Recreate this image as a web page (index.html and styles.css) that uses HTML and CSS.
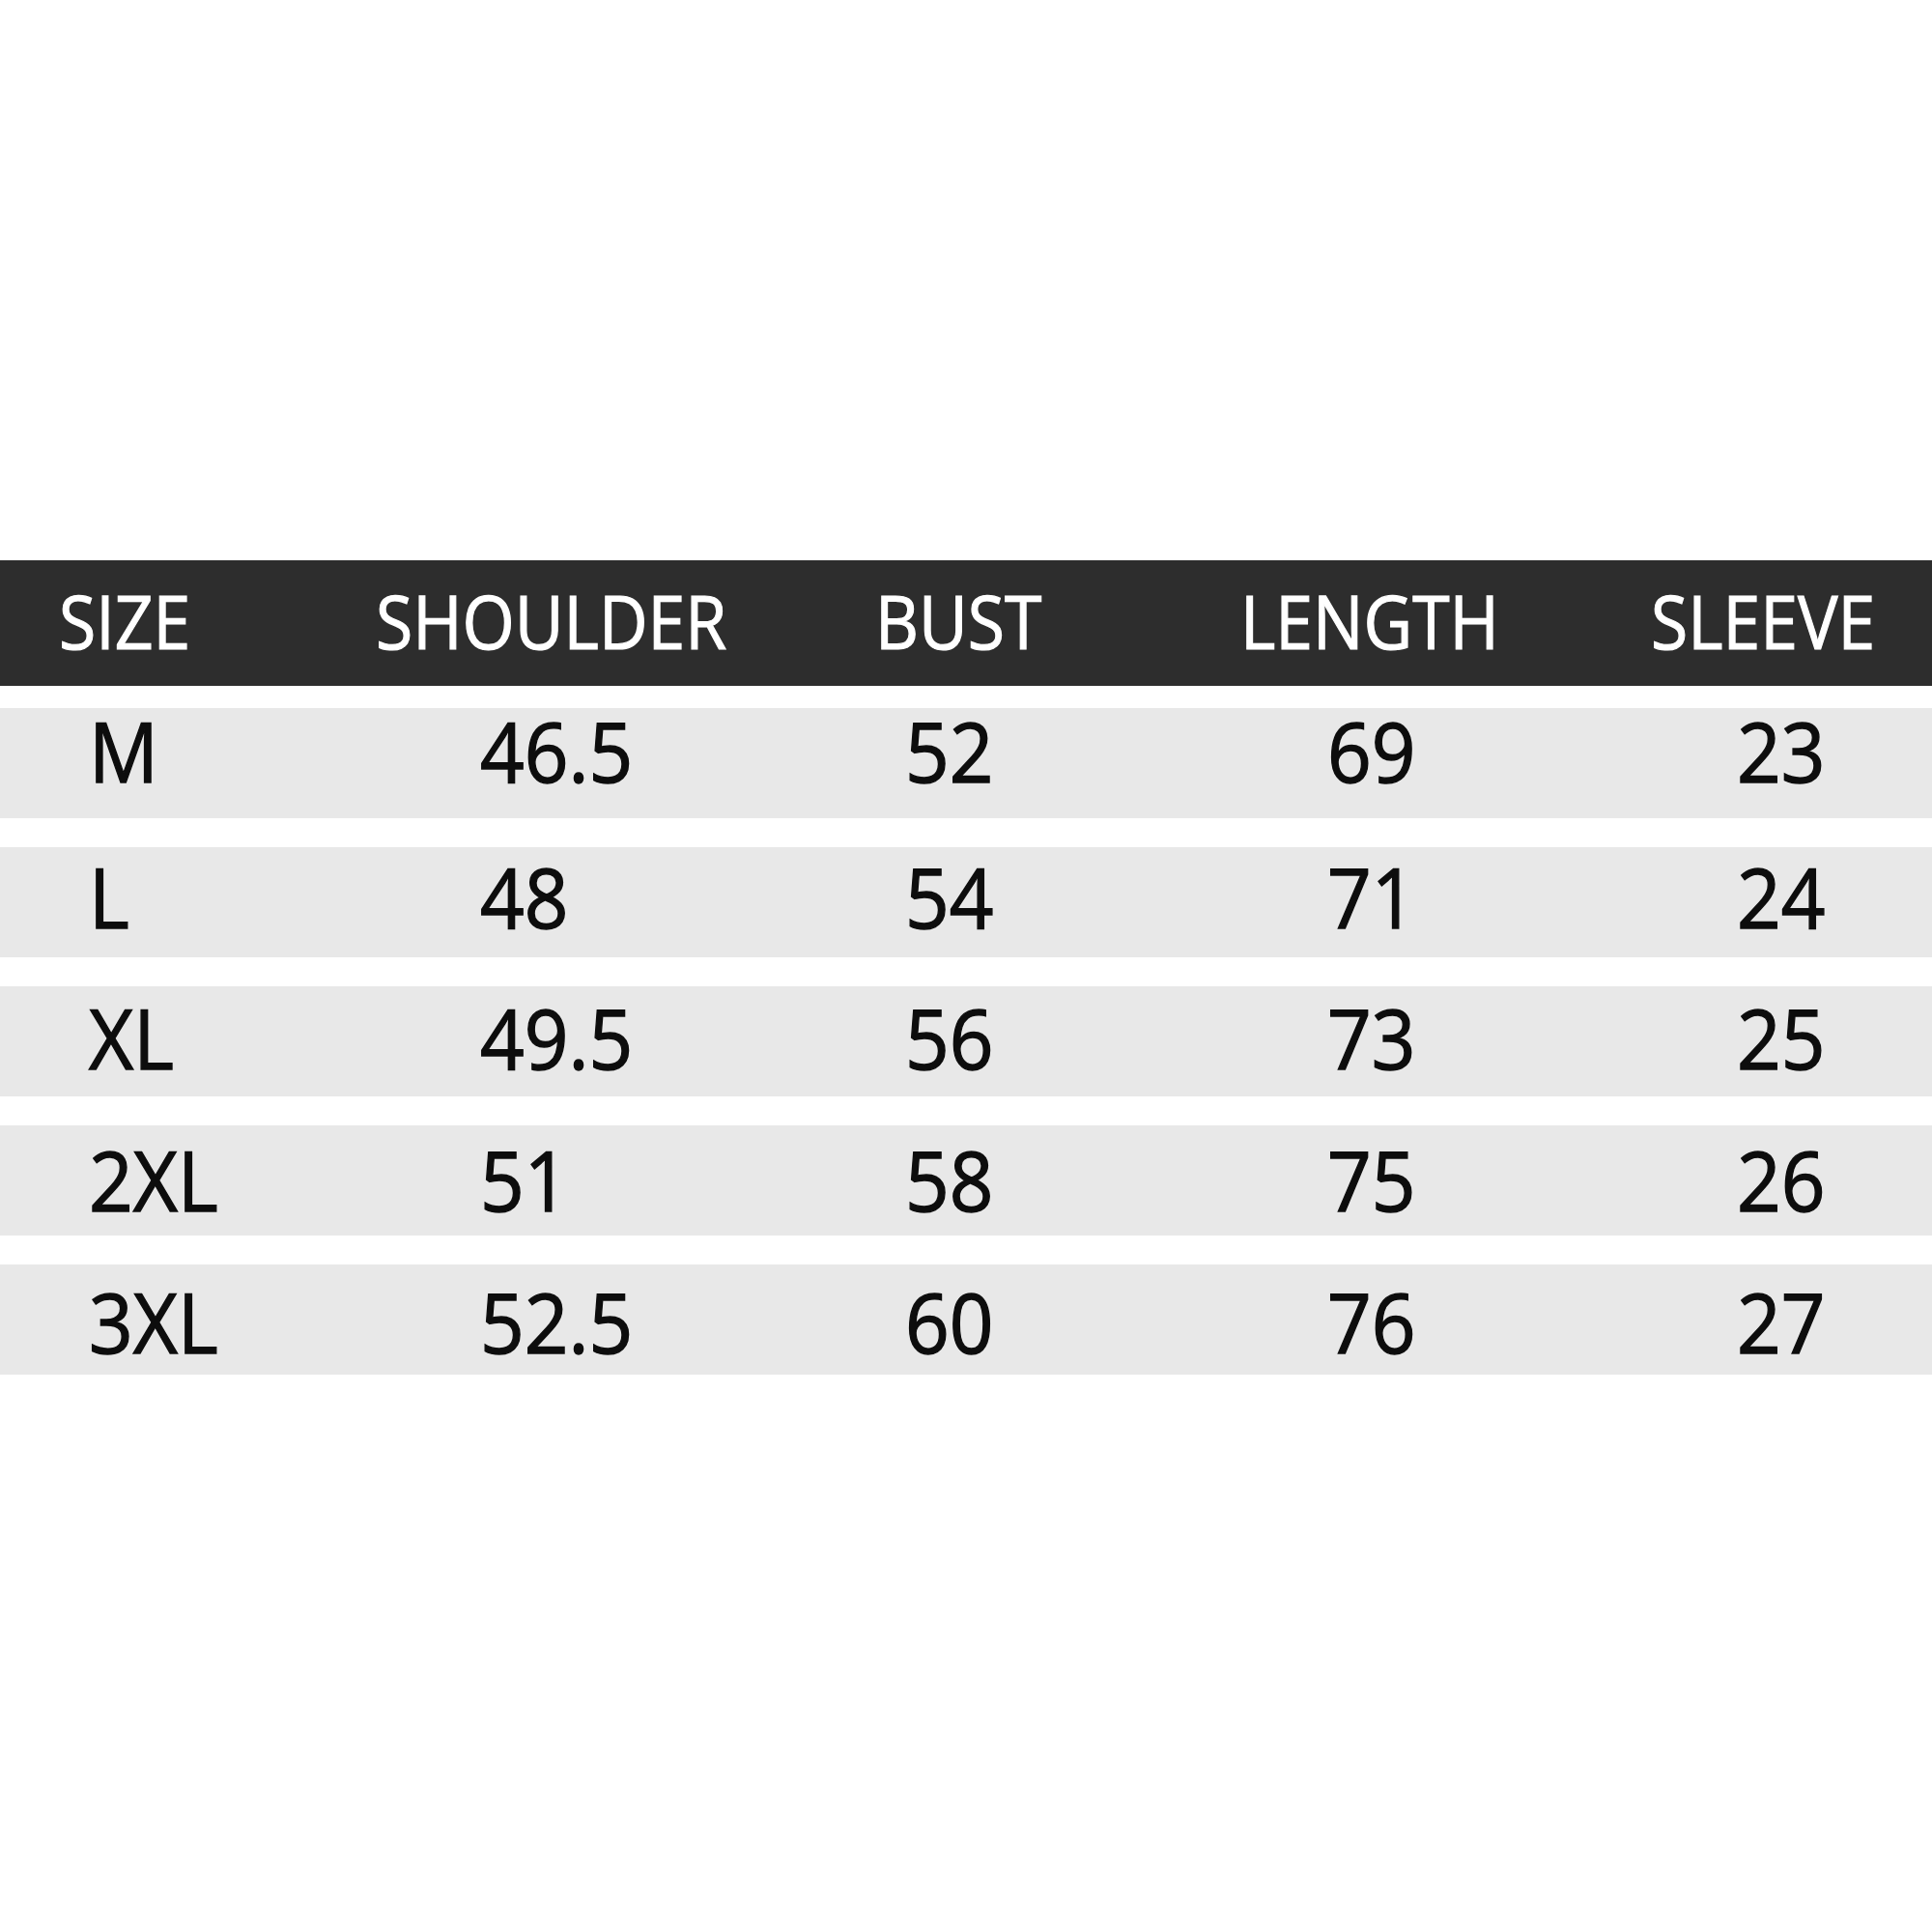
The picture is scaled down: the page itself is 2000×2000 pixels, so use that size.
FILE: index.html
```html
<!DOCTYPE html>
<html lang="en">
<head>
<meta charset="utf-8">
<title>Size Chart</title>
<link rel="stylesheet" href="styles.css">
</head>
<body>
<div class="chart">
  <div class="head">
    <span class="cell">SIZE</span>
    <span class="cell">SHOULDER</span>
    <span class="cell">BUST</span>
    <span class="cell">LENGTH</span>
    <span class="cell">SLEEVE</span>
  </div>
  <div class="rows">
    <div class="row r1"><span class="cell">M</span><span class="cell">46.5</span><span class="cell">52</span><span class="cell">69</span><span class="cell">23</span></div>
    <div class="row r2"><span class="cell">L</span><span class="cell">48</span><span class="cell">54</span><span class="cell">71</span><span class="cell">24</span></div>
    <div class="row r3"><span class="cell">XL</span><span class="cell">49.5</span><span class="cell">56</span><span class="cell">73</span><span class="cell">25</span></div>
    <div class="row r4"><span class="cell">2XL</span><span class="cell">51</span><span class="cell">58</span><span class="cell">75</span><span class="cell">26</span></div>
    <div class="row r5"><span class="cell">3XL</span><span class="cell">52.5</span><span class="cell">60</span><span class="cell">76</span><span class="cell">27</span></div>
  </div>
</div>
</body>
</html>
```
FILE: styles.css
```css
html, body {
  margin: 0;
  padding: 0;
  background: #ffffff;
}

body {
  font-family: "Open Sans", "Noto Sans", "DejaVu Sans", sans-serif;
  width: 2000px;
  height: 2000px;
  overflow: hidden;
}

.chart {
  padding-top: 580px;
}

.head {
  box-sizing: border-box;
  height: 130px;
  background: #2d2d2d;
  color: #ffffff;
  display: grid;
  grid-template-columns: 328px 517px 378px 425px 1fr;
  padding: 24px 0 0 61px;
  font-size: 77px;
  line-height: 77px;
  font-weight: 400;
  -webkit-text-stroke: 1.2px #ffffff;
}

.head .cell {
  transform: scaleX(0.905);
}

.rows {
  margin-top: 23px;
  display: flex;
  flex-direction: column;
  gap: 30px;
}

.row {
  box-sizing: border-box;
  height: 114px;
  background: #e8e8e8;
  color: #0d0d0d;
  display: grid;
  grid-template-columns: 405px 440px 437px 424px 1fr;
  padding: 1px 0 0 92px;
  font-size: 86px;
  line-height: 86px;
  font-weight: 400;
  -webkit-text-stroke: 1.4px #0d0d0d;
}

.row.r2 { padding-top: 8px; }
.row.r3 { padding-top: 10px; }
.row.r4 { padding-top: 13px; }
.row.r5 { padding-top: 16px; }

.cell {
  display: inline-block;
  justify-self: start;
  white-space: nowrap;
  transform: scaleX(0.93);
  transform-origin: left center;
}
```
